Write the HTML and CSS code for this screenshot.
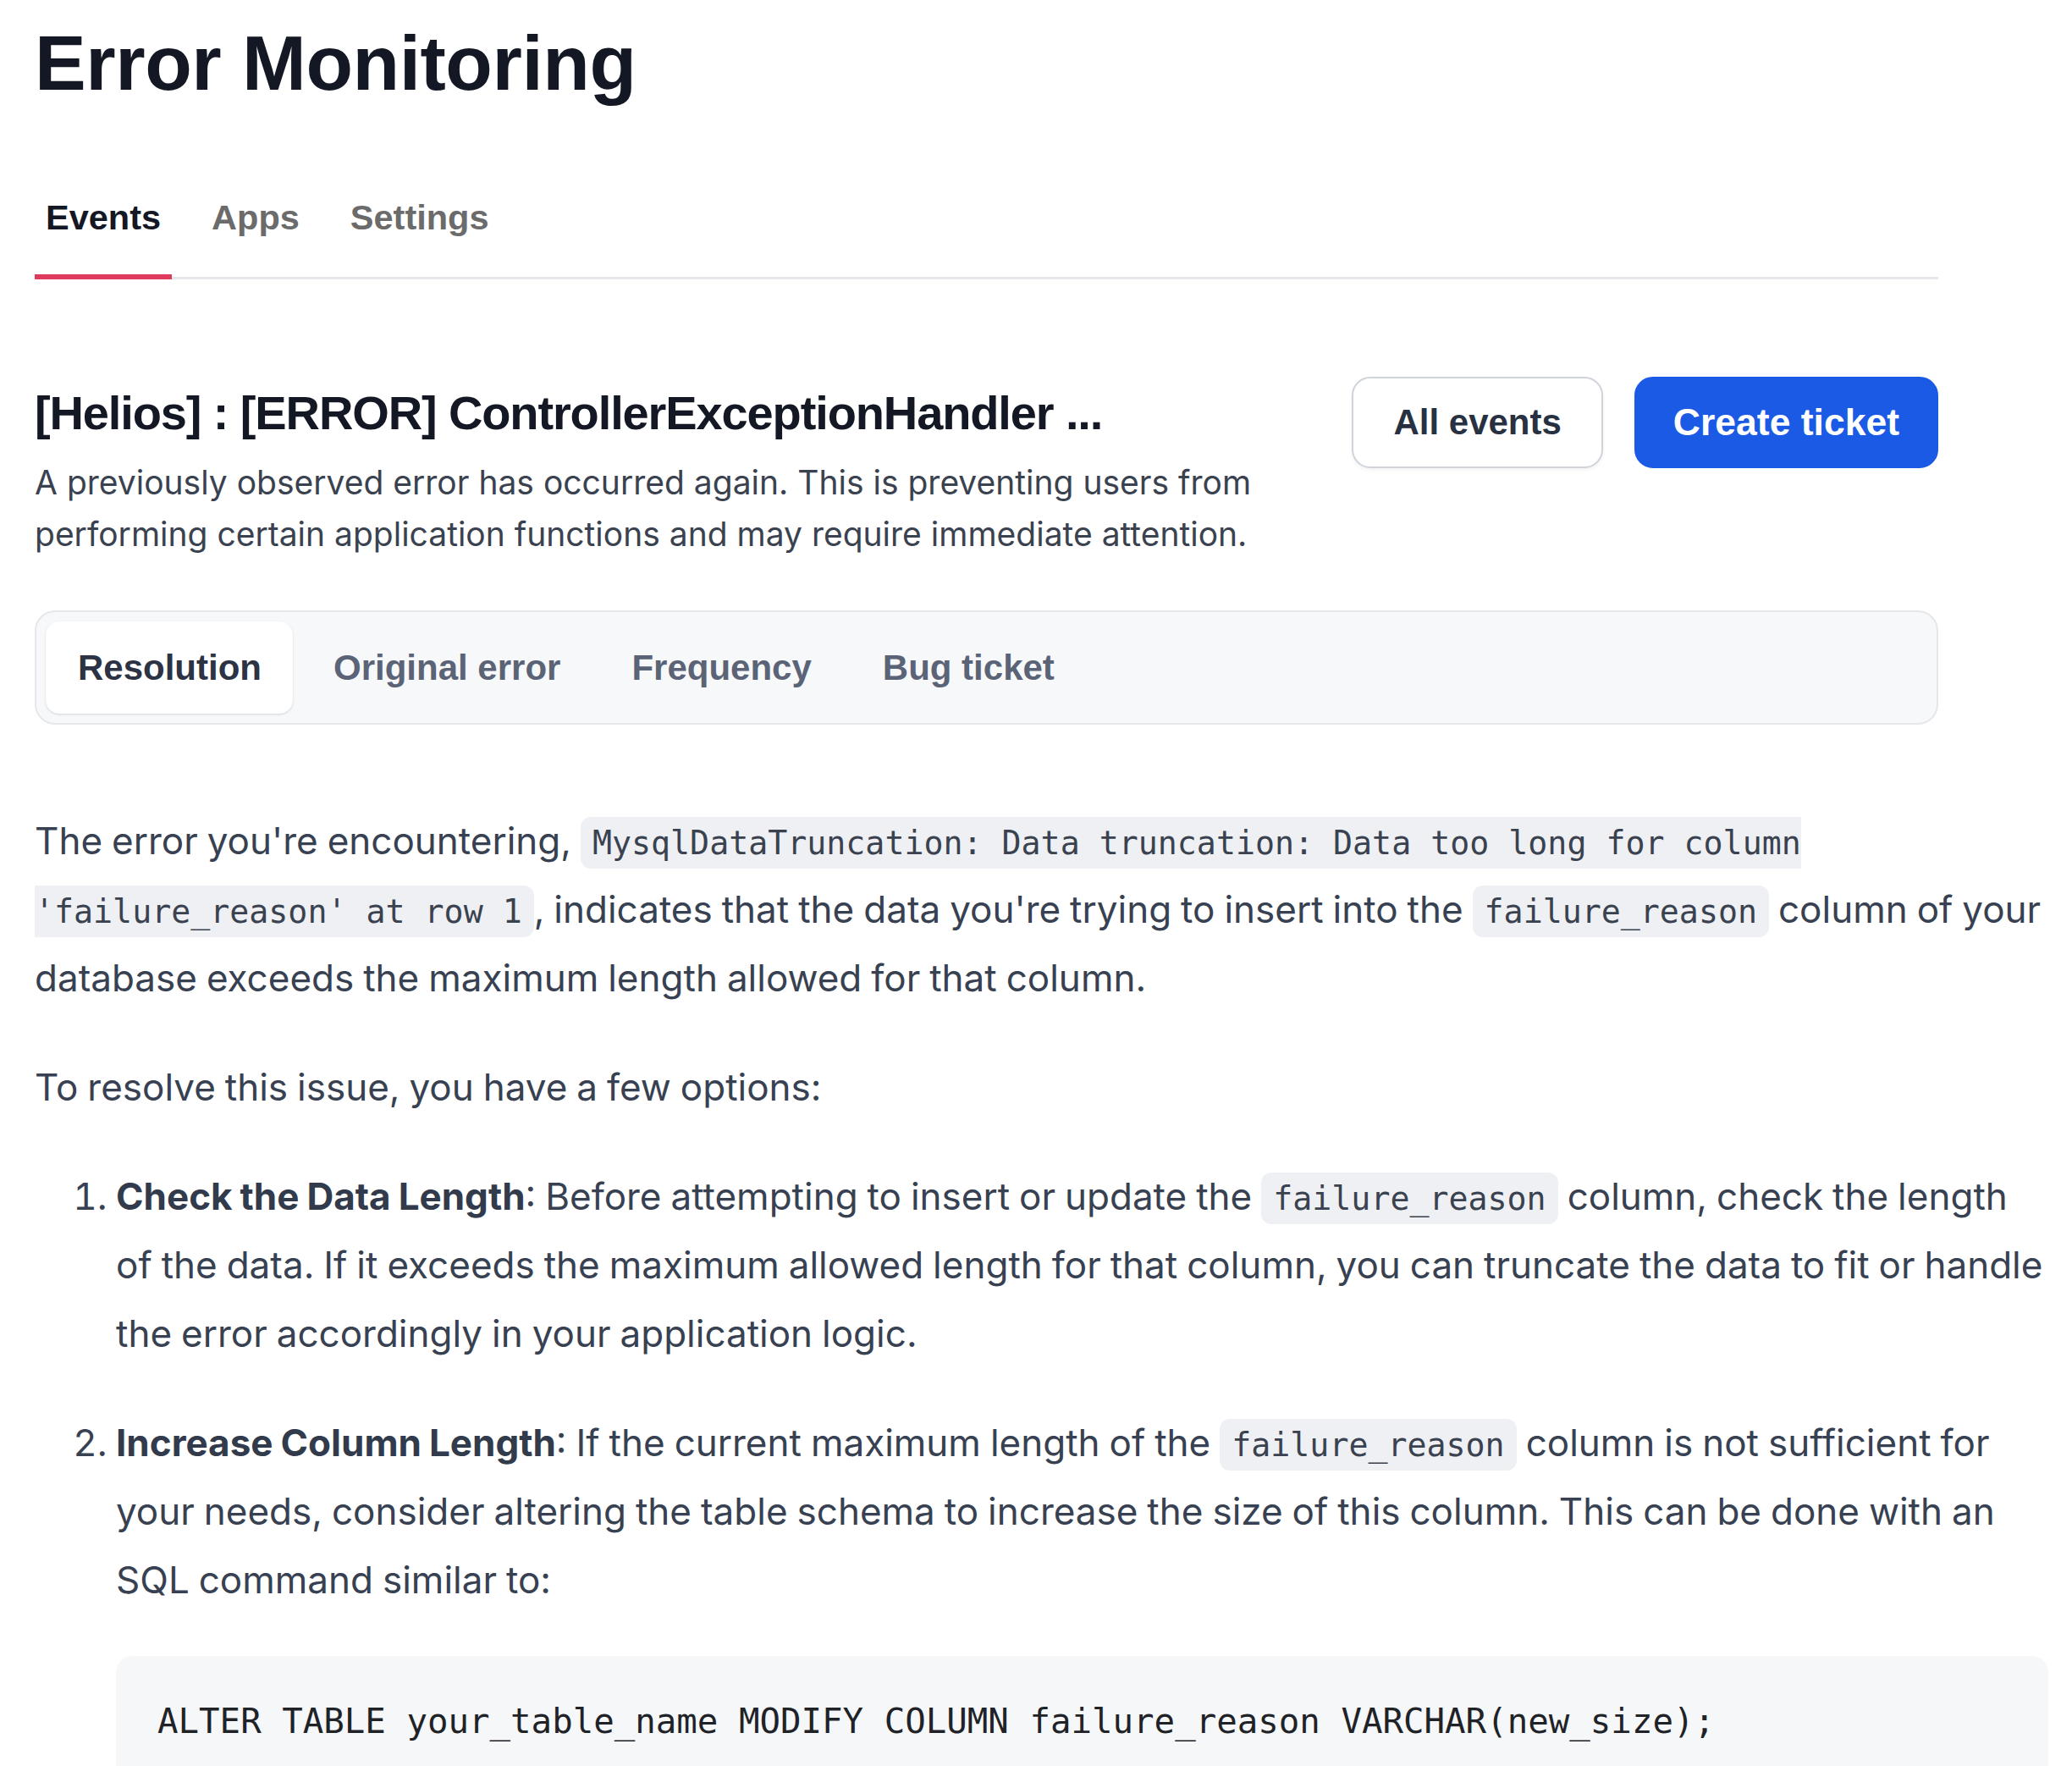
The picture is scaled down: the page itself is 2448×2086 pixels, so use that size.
FILE: index.html
```html
<!DOCTYPE html>
<html lang="en">
<head>
<meta charset="utf-8">
<title>Error Monitoring</title>
<link rel="stylesheet" href="styles.css">
</head>
<body>
<div class="page">
  <h1 class="title">Error Monitoring</h1>

  <nav class="nav">
    <a class="nav-tab is-active">Events</a>
    <a class="nav-tab">Apps</a>
    <a class="nav-tab">Settings</a>
  </nav>

  <header class="event-header">
    <div class="event-info">
      <h2 class="event-title">[Helios] : [ERROR] ControllerExceptionHandler ...</h2>
      <p class="event-desc">A previously observed error has occurred again. This is preventing users from performing certain application functions and may require immediate attention.</p>
    </div>
    <div class="actions">
      <button class="btn btn-secondary">All events</button>
      <button class="btn btn-primary">Create ticket</button>
    </div>
  </header>

  <div class="segmented">
    <button class="seg is-active">Resolution</button>
    <button class="seg">Original error</button>
    <button class="seg">Frequency</button>
    <button class="seg">Bug ticket</button>
  </div>

  <article class="prose">
    <p>The error you're encountering, <code>MysqlDataTruncation: Data truncation: Data too long for column 'failure_reason' at row 1</code>, indicates that the data you're trying to insert into the <code>failure_reason</code> column of your database exceeds the maximum length allowed for that column.</p>
    <p>To resolve this issue, you have a few options:</p>
    <ol>
      <li>
        <p><strong>Check the Data Length</strong>: Before attempting to insert or update the <code>failure_reason</code> column, check the length of the data. If it exceeds the maximum allowed length for that column, you can truncate the data to fit or handle the error accordingly in your application logic.</p>
      </li>
      <li>
        <p><strong>Increase Column Length</strong>: If the current maximum length of the <code>failure_reason</code> column is not sufficient for your needs, consider altering the table schema to increase the size of this column. This can be done with an SQL command similar to:</p>
        <pre class="code-block"><code>ALTER TABLE your_table_name MODIFY COLUMN failure_reason VARCHAR(new_size);</code></pre>
      </li>
    </ol>
  </article>
</div>
</body>
</html>
```

FILE: styles.css
```css
* {
  box-sizing: border-box;
}

html, body {
  margin: 0;
  padding: 0;
  background: #ffffff;
}

body {
  font-family: "Liberation Sans", Arial, Helvetica, sans-serif;
  color: #111827;
  overflow: hidden;
}

.page {
  padding: 29px 0 0 41px;
}

/* Title */
.title {
  margin: 0;
  font-size: 91px;
  line-height: 91px;
  font-weight: 700;
  letter-spacing: -0.005em;
  color: #131824;
}

/* Top nav */
.nav {
  width: 2249px;
  margin-top: 113px;
  display: flex;
  align-items: flex-end;
  gap: 34px;
  border-bottom: 3px solid #e5e7eb;
}

.nav-tab {
  display: block;
  padding: 0 13px 43px;
  margin-bottom: -3px;
  font-size: 41.5px;
  line-height: 48px;
  font-weight: 700;
  color: #6b6b6b;
  border-bottom: 6px solid transparent;
  text-decoration: none;
}

.nav-tab.is-active {
  color: #131824;
  border-bottom-color: #df3b5c;
}

/* Event header */
.event-header {
  width: 2249px;
  margin-top: 115px;
  display: flex;
  justify-content: space-between;
  align-items: flex-start;
  gap: 48px;
}

.event-info {
  flex: 1;
  padding-top: 8px;
}

.event-title {
  margin: 0;
  font-size: 56px;
  line-height: 70px;
  font-weight: 700;
  letter-spacing: -0.02em;
  color: #131824;
}

.event-desc {
  margin: 16px 0 0;
  font-family: Inter, "Liberation Sans", sans-serif;
  font-size: 39px;
  line-height: 61px;
  color: #3a4250;
}

.actions {
  display: flex;
  gap: 37px;
}

.btn {
  height: 108px;
  padding: 0 47px;
  border-radius: 22px;
  font-family: "Liberation Sans", Arial, sans-serif;
  font-size: 42px;
  font-weight: 700;
  cursor: pointer;
}

.btn-secondary {
  background: #ffffff;
  color: #283141;
  border: 2px solid #cfd3da;
  box-shadow: 0 2px 4px rgba(17, 24, 39, 0.06);
}

.btn-primary {
  padding: 0 44px;
  font-size: 44.5px;
  background: #1a5ae5;
  color: #ffffff;
  border: 2px solid #1a5ae5;
}

/* Segmented control */
.segmented {
  width: 2249px;
  margin-top: 60px;
  display: flex;
  gap: 12px;
  padding: 11px;
  background: #f7f8fa;
  border: 2px solid #e5e7eb;
  border-radius: 24px;
}

.seg {
  height: 109px;
  padding: 0 36px;
  border: 0;
  border-radius: 16px;
  background: transparent;
  font-family: "Liberation Sans", Arial, sans-serif;
  font-size: 42px;
  line-height: 109px;
  font-weight: 700;
  color: #5b6477;
}

.seg:first-child {
  padding: 0 37px 0 38px;
}

.seg.is-active {
  background: #ffffff;
  color: #2b3344;
  box-shadow: 0 1px 3px rgba(17, 24, 39, 0.10), 0 1px 2px rgba(17, 24, 39, 0.06);
}

/* Prose */
.prose {
  width: 2379px;
  margin-top: 97px;
  font-family: Inter, "Liberation Sans", sans-serif;
  font-size: 44px;
  line-height: 81px;
  word-spacing: -1.4px;
  color: #374151;
}

.prose > p {
  margin: 0 0 48px;
}

.prose ol {
  margin: 0;
  padding-left: 96px;
}

.prose li p {
  margin: 0;
}

.prose li + li {
  margin-top: 48px;
}

.prose strong {
  font-weight: 700;
  color: #323b4b;
}

.prose code {
  font-family: "DejaVu Sans Mono", "Liberation Mono", monospace;
  font-size: 38.25px;
  line-height: 1;
  word-spacing: 0;
  padding: 8px 14px;
  background: #eef0f3;
  border-radius: 12px;
  color: #3a4250;
}

.code-block {
  margin: 49px 0 0;
  padding: 49px;
  background: #f6f7f9;
  border-radius: 20px;
  font-family: "DejaVu Sans Mono", "Liberation Mono", monospace;
  font-size: 40.75px;
  line-height: 56px;
  word-spacing: 0;
  color: #1f2328;
  white-space: pre;
}

.code-block code {
  font-size: inherit;
  line-height: inherit;
  padding: 0;
  background: none;
  border-radius: 0;
  color: inherit;
}
```
